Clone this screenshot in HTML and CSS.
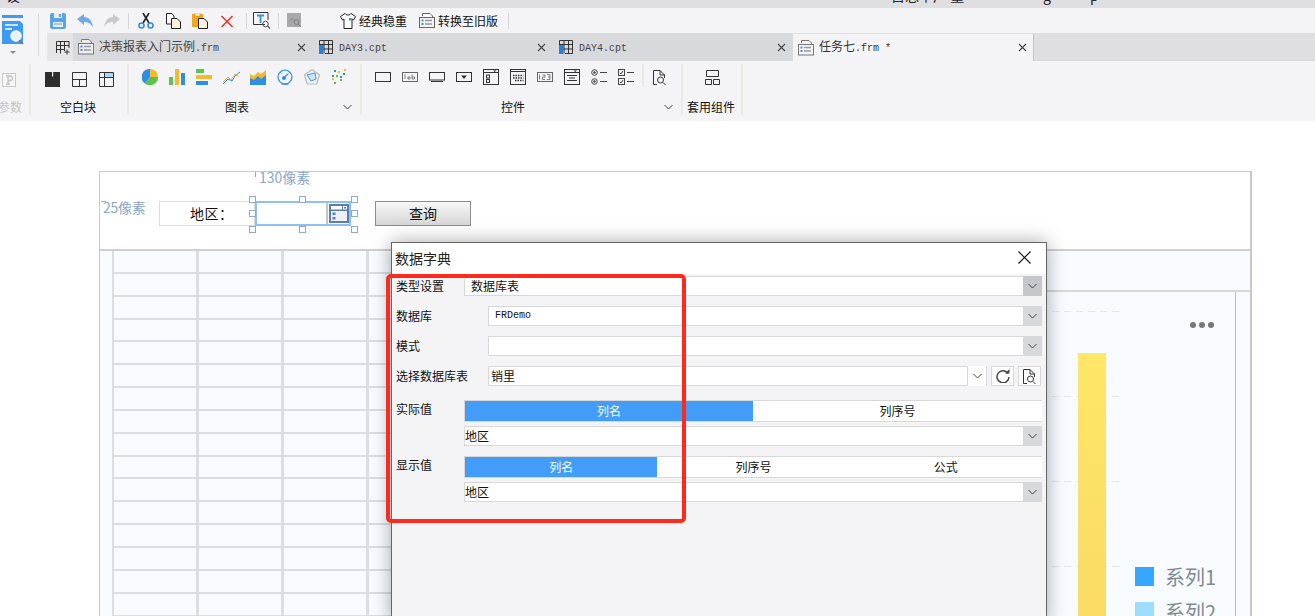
FILE: index.html
```html
<!DOCTYPE html>
<html lang="zh">
<head>
<meta charset="utf-8">
<title>数据字典</title>
<link rel="stylesheet" href="styles.css">
</head>
<body>
<div class="page">
  <div class="titlebar">
    <span class="tb-a">设</span>
    <span class="tb-b">目总不广 量</span>
    <span class="tb-c">g</span>
    <span class="tb-d">p</span>
  </div>

  <div class="head">
    <div class="logo-col">
      <svg class="logo" width="24" height="39" viewBox="0 0 24 39">
        <rect x="1" y="0" width="21" height="3" fill="#3d9bf5"/>
        <path d="M1 6H19L22 9V29H1Z" fill="#3d9bf5"/>
        <path d="M4 10H17M4 14H11" stroke="#fff" stroke-width="1.5"/>
        <circle cx="15" cy="21" r="5" fill="#e8f2fb" stroke="#fff" stroke-width="1.5"/>
        <path d="M18 25L22 29" stroke="#777" stroke-width="1.6"/>
        <path d="M9 36H15L12 39Z" fill="#8a8a8a"/>
      </svg>
    </div>
    <div class="head-main">
      <div class="toolbar">
        <svg class="ti" viewBox="0 0 16 16"><rect width="16" height="16" rx="2" fill="#5ca2e8"/><rect x="4" y="0" width="8" height="5" fill="#e5f0fb"/><rect x="9" y="1" width="2" height="3" fill="#5ca2e8"/><rect x="3" y="9" width="10" height="5" fill="#e5f0fb"/><path d="M4 11H12" stroke="#5ca2e8"/></svg>
        <svg class="ti" viewBox="0 0 16 16"><path d="M0 6L7 1V4C12 4 15 8 16 14C13 10 11 9 7 9V12Z" fill="#6fa9e5"/></svg>
        <svg class="ti ti-last" viewBox="0 0 16 16"><path d="M16 6L9 1V4C4 4 1 8 0 14C3 10 5 9 9 9V12Z" fill="#c9c9c9"/></svg>
        <i class="vsep"></i>
        <svg class="ti" viewBox="0 0 16 16"><path d="M11 0L5 10M5 0L11 10" stroke="#222" stroke-width="1.6" fill="none"/><circle cx="3.5" cy="12.5" r="2.5" fill="none" stroke="#2f8de4" stroke-width="1.6"/><circle cx="12.5" cy="12.5" r="2.5" fill="none" stroke="#2f8de4" stroke-width="1.6"/></svg>
        <svg class="ti" viewBox="0 0 16 16"><path d="M1.5 .5H7L9 3V11H1.5Z" fill="#fff" stroke="#222"/><path d="M6.5 5.500H12L15.500 9V15.500H6.500Z" fill="#fbf3dc" stroke="#222"/></svg>
        <svg class="ti" viewBox="0 0 16 16"><rect x="0" y="1" width="11" height="13" fill="#f2a81c"/><rect x="3" y="0" width="5" height="3" fill="#fff" stroke="#c9860c" stroke-width=".6"/><path d="M6.500 5.500H12L15.500 9V15.500H6.500Z" fill="#fbf3dc" stroke="#222"/></svg>
        <svg class="ti" viewBox="0 0 16 16"><path d="M2.500 3L13.500 14M13.500 3L2.500 14" stroke="#e8332a" stroke-width="1.5"/></svg>
        <i class="vsep vsep-b"></i>
        <svg class="ti ti-t" viewBox="0 0 18 17"><path d="M12 12.500H.5V.5H15V8" fill="none" stroke="#333"/><path d="M4 3.500H11M7.500 3.500V11" stroke="#3f8fe0" stroke-width="1.800"/><circle cx="12.500" cy="12" r="2.800" fill="none" stroke="#555"/><path d="M14.500 14L17 16.500" stroke="#555" stroke-width="1.300"/></svg>
        <i class="vsep vsep-c"></i>
        <svg class="ti ti-g" viewBox="0 0 15 15"><rect width="14" height="14" fill="#a9a9a9"/><path d="M2 9L5 5L8 9" fill="none" stroke="#8d8d8d"/><circle cx="9.500" cy="9" r="2.500" fill="none" stroke="#808080"/><path d="M11 11L14 14" stroke="#808080"/></svg>
        <svg class="ti ti-s" viewBox="0 0 16 16"><path d="M5 .5L.5 3.500L2.500 7L4 6V15.500H12V6L13.500 7L15.500 3.500L11 .5C10 2.500 6 2.500 5 .5Z" fill="#fff" stroke="#222"/><rect x="9" y="5" width="2.500" height="2.500" fill="#2f8de4"/></svg>
        <span class="tb-text">经典稳重</span>
        <svg class="ti ti-d" viewBox="0 0 16 16"><path d="M3.500 3V.5H11L13.500 3V5" fill="#fff" stroke="#666"/><rect x=".5" y="4.500" width="15" height="10" fill="#f4f4f6" stroke="#666"/><rect x="2.500" y="6.500" width="2" height="2" fill="#3d8fe0"/><rect x="2.500" y="10" width="2" height="2" fill="#3d8fe0"/><path d="M6 7.500H13M6 11H13" stroke="#999" stroke-width="1.500"/></svg>
        <span class="tb-text tb-text-b">转换至旧版</span>
        <i class="vsep vsep-d"></i>
      </div>
      <div class="tabs">
        <div class="tab-add">
          <svg width="15" height="15" viewBox="0 0 15 15"><path d="M.5 13V1.500H13V8M.5 5.500H13M.5 9.500H9M4.500 1.500V13.500M8.500 1.500V11" fill="none" stroke="#333"/><path d="M11 9.500V14.500M8.500 12H13.500" stroke="#333"/></svg>
        </div>
        <div class="tab">
          <svg class="tab-ic-f" viewBox="0 0 16 16"><path d="M3.500 3V.5H11L13.500 3V5" fill="#eee" stroke="#777"/><rect x=".5" y="4.500" width="15" height="10.500" fill="#eee" stroke="#777"/><rect x="2.500" y="6.500" width="2" height="2" fill="#3d8fe0"/><rect x="2.500" y="10" width="2" height="2" fill="#3d8fe0"/><path d="M6 7.500H13M6 11H13" stroke="#999" stroke-width="1.500"/></svg>
          <span class="tab-name">决策报表入门示例<span class="mono">.frm</span></span>
          <span class="tab-x"><svg width="9" height="9" viewBox="0 0 9 9"><path d="M1 1L8 8M8 1L1 8" stroke="#444" stroke-width="1.100"/></svg></span>
        </div>
        <div class="tab">
          <svg class="tab-ic-c" viewBox="0 0 14 14"><path d="M.5 13V.5H13.500V13.500H6M.5 4.500H13.500M.5 9H13.500M5 .5V13.500M9.500 .5V13.500" fill="none" stroke="#333"/><path d="M0 5H5V9H4V14H0Z" fill="#2b7fd6"/></svg>
          <span class="tab-name"><span class="mono">DAY3.cpt</span></span>
          <span class="tab-x"><svg width="9" height="9" viewBox="0 0 9 9"><path d="M1 1L8 8M8 1L1 8" stroke="#444" stroke-width="1.100"/></svg></span>
        </div>
        <div class="tab">
          <svg class="tab-ic-c" viewBox="0 0 14 14"><path d="M.5 13V.5H13.500V13.500H6M.5 4.500H13.500M.5 9H13.500M5 .5V13.500M9.500 .5V13.500" fill="none" stroke="#333"/><path d="M0 5H5V9H4V14H0Z" fill="#2b7fd6"/></svg>
          <span class="tab-name"><span class="mono">DAY4.cpt</span></span>
          <span class="tab-x"><svg width="9" height="9" viewBox="0 0 9 9"><path d="M1 1L8 8M8 1L1 8" stroke="#444" stroke-width="1.100"/></svg></span>
        </div>
        <div class="tab tab-on">
          <svg class="tab-ic-f" viewBox="0 0 16 16"><path d="M3.500 3V.5H11L13.500 3V5" fill="#f4f4f6" stroke="#777"/><rect x=".5" y="4.500" width="15" height="10.500" fill="#f4f4f6" stroke="#777"/><rect x="2.500" y="6.500" width="2" height="2" fill="#3d8fe0"/><rect x="2.500" y="10" width="2" height="2" fill="#3d8fe0"/><path d="M6 7.500H13M6 11H13" stroke="#999" stroke-width="1.500"/></svg>
          <span class="tab-name tab-name-on">任务七<span class="mono">.frm *</span></span>
          <span class="tab-x"><svg width="9" height="9" viewBox="0 0 9 9"><path d="M1 1L8 8M8 1L1 8" stroke="#444" stroke-width="1.100"/></svg></span>
        </div>
        <div class="tab-rest"></div>
      </div>
    </div>
  </div>

  <div class="ribbon">
    <section class="rs rs-0">
      <div class="rs-icons rs-icons-0">
        <svg width="14" height="14" viewBox="0 0 14 14"><rect x=".5" y=".5" width="13" height="13" fill="#f7f7f7" stroke="#c8c8c8"/><path d="M4 3H8.500C11 3 11 7.500 8.500 7.500H6M6 3V11M4 11H8" fill="none" stroke="#c0c0c0" stroke-width="1.300"/></svg>
      </div>
      <div class="rs-label rs-label-0">参数</div>
    </section>
    <section class="rs rs-1">
      <div class="rs-icons rs-icons-1">
        <svg width="15" height="15" viewBox="0 0 15 15"><rect width="15" height="15" fill="#2e2e2e"/><rect x="7" y="0" width="1.200" height="4.500" fill="#f4f4f6"/></svg>
        <svg width="15" height="15" viewBox="0 0 15 15"><path d="M.5 .5H14.500V14.500H.5ZM.5 7.500H14.500M7.500 7.500V14.500" fill="none" stroke="#333"/></svg>
        <svg width="15" height="15" viewBox="0 0 15 15"><rect x="5" y="1" width="9" height="4" fill="#a9d6f7"/><path d="M.5 .5H14.500V14.500H.5ZM.5 5.500H14.500M5.500 .5V14.500" fill="none" stroke="#333"/></svg>
      </div>
      <div class="rs-label rs-label-1">空白块</div>
    </section>
    <section class="rs rs-2">
      <div class="rs-icons rs-icons-2">
        <svg width="16" height="16" viewBox="0 0 16 16"><path d="M8 0A8 8 0 0 1 16 8H8Z" fill="#f5b92e"/><path d="M16 8A8 8 0 0 1 3 14.500L8 8Z" fill="#5fc24f"/><path d="M3 14.500A8 8 0 0 1 8 0V8Z" fill="#2e8fe0"/></svg>
        <svg width="16" height="16" viewBox="0 0 16 16"><rect x="0" y="8" width="4" height="8" fill="#5fc24f"/><rect x="6" y="0" width="4" height="16" fill="#f5b92e"/><rect x="12" y="4" width="4" height="12" fill="#2e8fe0"/></svg>
        <svg width="16" height="16" viewBox="0 0 16 16"><rect x="0" y="0" width="8" height="4" fill="#5fc24f"/><rect x="0" y="6" width="16" height="4" fill="#f5b92e"/><rect x="0" y="12" width="12" height="4" fill="#2e8fe0"/></svg>
        <svg class="i-line" width="17" height="16" viewBox="0 0 17 16"><path d="M0 13L5 8L8 11L12 5L16 8" fill="none" stroke="#f5b92e"/><path d="M0 15L5 10L9 12L12 7L17 3" fill="none" stroke="#2e8fe0"/></svg>
        <svg width="16" height="16" viewBox="0 0 16 16"><path d="M0 5L4 7L8 3L11 5L16 1V11H0Z" fill="#f5b92e"/><path d="M0 9L4 11L8 7L11 10L16 6V16H0Z" fill="#2e8fe0"/></svg>
        <svg width="16" height="16" viewBox="0 0 16 16"><circle cx="8" cy="8" r="7" fill="none" stroke="#2e8fe0" stroke-width="1.200"/><path d="M3 3L4.500 4.500M13 3L11.500 4.500" stroke="#2e8fe0"/><circle cx="7" cy="9" r="2" fill="#2e8fe0"/><path d="M7.500 8L11 5" stroke="#2e8fe0" stroke-width="1.200"/><path d="M4.500 15H11.500" stroke="#2e8fe0" stroke-width="1.500"/></svg>
        <svg width="16" height="16" viewBox="0 0 16 16"><path d="M8 .5L15.500 6L12.800 15H3.200L.5 6Z" fill="#eef2f5" stroke="#bbb" stroke-width="1.200"/><path d="M3 6L11 4L12 10L7 12Z" fill="#cfe4f6" stroke="#3d9bd6"/></svg>
        <svg width="16" height="16" viewBox="0 0 16 16"><g fill="#2e8fe0"><rect x="3" y="1" width="2" height="2"/><rect x="9" y="7" width="2" height="2"/><rect x="12" y="4" width="2" height="2"/><rect x="1" y="6" width="2" height="2"/></g><g fill="#f5b92e"><rect x="13" y="0" width="2" height="2"/><rect x="7" y="2" width="2" height="2"/><rect x="1" y="9" width="2" height="2"/></g><g fill="#5fc24f"><rect x="5" y="6" width="2" height="2"/><rect x="3" y="13" width="2" height="2"/><rect x="9" y="10" width="2" height="2"/></g></svg>
      </div>
      <div class="rs-label rs-label-2"><span>图表</span><svg class="chev" width="9" height="6" viewBox="0 0 9 6"><path d="M.5 1L4.500 5L8.500 1" fill="none" stroke="#444"/></svg></div>
    </section>
    <section class="rs rs-3">
      <div class="rs-icons rs-icons-3">
        <svg width="16" height="10" viewBox="0 0 16 10"><rect x=".5" y=".5" width="15" height="9" fill="none" stroke="#333"/></svg>
        <svg width="16" height="10" viewBox="0 0 16 10"><rect x=".5" y=".5" width="15" height="9" fill="none" stroke="#666"/><path d="M3 2.500V7M6 5H8V7H6ZM10 2.500V7H12.500V5H10" fill="none" stroke="#666" stroke-width=".8"/></svg>
        <svg width="16" height="10" viewBox="0 0 16 10"><rect x=".5" y=".5" width="15" height="7.500" fill="none" stroke="#333"/><path d="M2 9.500H14" stroke="#333"/></svg>
        <svg width="16" height="10" viewBox="0 0 16 10"><rect x=".5" y=".5" width="15" height="9" fill="none" stroke="#333"/><path d="M8 7L5 3.500H11Z" fill="#333"/></svg>
        <svg width="16" height="16" viewBox="0 0 16 16"><rect x=".5" y=".5" width="15" height="15" fill="none" stroke="#333"/><path d="M.5 3.500H15.500" stroke="#333"/><path d="M10 1.500H13.500L11.700 3Z" fill="#333"/><rect x="3.500" y="6" width="3" height="3" fill="none" stroke="#333"/><rect x="3.500" y="10.500" width="3" height="3" fill="none" stroke="#333"/></svg>
        <svg width="16" height="16" viewBox="0 0 16 16"><rect x=".5" y=".5" width="15" height="15" fill="none" stroke="#333"/><path d="M.5 2.500H15.500" stroke="#333"/><path d="M3 6.500H13.500M3 9H13.500M5 11.500H13.500" stroke="#333" stroke-width="1.500" stroke-dasharray="1.500 1"/></svg>
        <svg width="16" height="10" viewBox="0 0 16 10"><rect x=".5" y=".5" width="15" height="9" fill="none" stroke="#666"/><path d="M2.500 2.500V7.500M5.500 3H8V5H5.500V7.500H8M10 2.500H13V7.500H10M11 5H13" fill="none" stroke="#666" stroke-width=".8"/></svg>
        <svg width="16" height="16" viewBox="0 0 16 16"><rect x=".5" y=".5" width="15" height="15" fill="none" stroke="#333"/><path d="M.5 3.500H15.500" stroke="#333"/><path d="M9.500 1.500H13L11.200 3Z" fill="#333"/><path d="M3 6.500H13M5 9H11M3 11.500H13" stroke="#333"/></svg>
        <svg width="16" height="16" viewBox="0 0 16 16"><circle cx="3.500" cy="3.500" r="2.800" fill="none" stroke="#444"/><circle cx="3.500" cy="3.500" r="1.200" fill="#444"/><circle cx="3.500" cy="12.500" r="2.800" fill="none" stroke="#444"/><circle cx="3.500" cy="12.500" r="1.200" fill="#444"/><path d="M9 3.500H16M9 12.500H16" stroke="#444" stroke-width="1.200"/></svg>
        <svg width="16" height="16" viewBox="0 0 16 16"><rect x=".5" y=".5" width="6" height="6" fill="none" stroke="#444"/><rect x=".5" y="9.500" width="6" height="6" fill="none" stroke="#444"/><path d="M2 4L3 5L5 2M2 13L3 14L5 11" fill="none" stroke="#444"/><path d="M9 3.500H16M9 12.500H16" stroke="#444" stroke-width="1.200"/></svg>
        <i class="inner-sep"></i>
        <svg class="i-find" width="13" height="15" viewBox="0 0 13 15"><path d="M4 14.500H.5V.5H7L11.500 5V8" fill="none" stroke="#333"/><path d="M7 .5V5H11.500" fill="none" stroke="#333"/><circle cx="7.500" cy="10" r="3" fill="none" stroke="#333"/><path d="M10 12.500L12.500 15" stroke="#333"/></svg>
      </div>
      <div class="rs-label rs-label-3"><span>控件</span><svg class="chev" width="9" height="6" viewBox="0 0 9 6"><path d="M.5 1L4.500 5L8.500 1" fill="none" stroke="#444"/></svg></div>
    </section>
    <section class="rs rs-4">
      <div class="rs-icons rs-icons-4">
        <svg width="15" height="15" viewBox="0 0 15 15"><path d="M1.500 .5H13.500V6.500H1.500ZM.5 9.500H6.500V14.500H.5ZM8.500 9.500H14.500V14.500H8.500Z" fill="none" stroke="#333"/></svg>
      </div>
      <div class="rs-label rs-label-4">套用组件</div>
    </section>
  </div>

  <main class="canvas">
    <div class="frame">
      <div class="query">
        <span class="dim dim-h">25像素</span>
        <div class="q-label">地区：</div>
        <div class="q-input">
          <i class="q-sep"></i>
          <svg class="q-ic" width="20" height="19" viewBox="0 0 20 19"><rect width="20" height="19" fill="#5b7cae"/><rect x="2" y="2" width="11" height="3.500" fill="#fff"/><rect x="14" y="2" width="4" height="3.500" fill="#fff"/><rect x="15" y="3" width="2" height="1.500" fill="#5b7cae"/><rect x="2" y="7" width="16" height="10" fill="#eef2f8"/><rect x="3.500" y="8.500" width="3" height="2.500" fill="#5b7cae"/><rect x="3.500" y="13" width="3" height="2.500" fill="#5b7cae"/></svg>
        </div>
        <button class="q-btn">查询</button>
        <span class="dim dim-w">130像素</span>
        <i class="tick tick-h"></i>
        <i class="tick tick-w"></i>
        <i class="hd h1"></i><i class="hd h2"></i><i class="hd h3"></i><i class="hd h4"></i><i class="hd h5"></i><i class="hd h6"></i><i class="hd h7"></i><i class="hd h8"></i>
      </div>
      <div class="report">
        <div class="sheet"></div>
        <div class="side">
          <div class="side-head"></div>
          <div class="chart">
            <div class="more"><i></i><i></i><i></i></div>
            <div class="bar"></div>
            <div class="legend">
              <div class="lg"><i class="sw sw-1"></i>系列1</div>
              <div class="lg"><i class="sw sw-2"></i>系列2</div>
            </div>
          </div>
        </div>
      </div>
    </div>
  </main>

  <div class="dialog">
    <header class="d-title">
      <span>数据字典</span>
      <svg width="13" height="13" viewBox="0 0 13 13"><path d="M.5 .5L12.500 12.500M12.500 .5L.5 12.500" stroke="#111" stroke-width="1.100"/></svg>
    </header>
    <div class="d-body">
      <div class="d-row">
        <label>类型设置</label>
        <div class="combo"><span class="v v-6">数据库表</span><b class="arr arr-on"><svg width="9" height="6" viewBox="0 0 9 6"><path d="M.5 1L4.500 5L8.500 1" fill="none" stroke="#444"/></svg></b></div>
      </div>
      <div class="d-row">
        <label class="wide">数据库</label>
        <div class="combo"><span class="v v-6 mono-v">FRDemo</span><b class="arr"><svg width="9" height="6" viewBox="0 0 9 6"><path d="M.5 1L4.500 5L8.500 1" fill="none" stroke="#444"/></svg></b></div>
      </div>
      <div class="d-row">
        <label class="wide">模式</label>
        <div class="combo"><span class="v"></span><b class="arr"><svg width="9" height="6" viewBox="0 0 9 6"><path d="M.5 1L4.500 5L8.500 1" fill="none" stroke="#444"/></svg></b></div>
      </div>
      <div class="d-row">
        <label class="wide">选择数据库表</label>
        <div class="combo combo-t"><span class="v v-3">销里</span><b class="arr arr-w"><svg width="9" height="6" viewBox="0 0 9 6"><path d="M.5 1L4.500 5L8.500 1" fill="none" stroke="#444"/></svg></b></div>
        <button class="sq"><svg width="14" height="14" viewBox="0 0 14 14"><path d="M12 4.500A6 6 0 1 0 13 8" fill="none" stroke="#444" stroke-width="1.500"/><path d="M9 4.500H13.500V0Z" fill="#444"/></svg></button>
        <button class="sq"><svg width="13" height="15" viewBox="0 0 13 15"><path d="M4 14.500H.5V.5H7L11.500 5V8" fill="none" stroke="#333"/><path d="M7 .5V5H11.500" fill="none" stroke="#333"/><circle cx="7.500" cy="10" r="3" fill="none" stroke="#333"/><path d="M10 12.500L12.500 15" stroke="#333"/></svg></button>
      </div>
      <div class="d-row d-row-seg">
        <label>实际值</label>
        <div class="seg"><span class="on seg-a">列名</span><span>列序号</span></div>
      </div>
      <div class="d-row d-row-sub">
        <div class="combo"><span class="v v-1">地区</span><b class="arr"><svg width="9" height="6" viewBox="0 0 9 6"><path d="M.5 1L4.500 5L8.500 1" fill="none" stroke="#444"/></svg></b></div>
      </div>
      <div class="d-row d-row-seg2">
        <label>显示值</label>
        <div class="seg"><span class="on">列名</span><span>列序号</span><span>公式</span></div>
      </div>
      <div class="d-row d-row-sub">
        <div class="combo"><span class="v v-1">地区</span><b class="arr"><svg width="9" height="6" viewBox="0 0 9 6"><path d="M.5 1L4.500 5L8.500 1" fill="none" stroke="#444"/></svg></b></div>
      </div>
    </div>
  </div>

  <div class="redbox"></div>
</div>
</body>
</html>
```

FILE: styles.css
```css
* { box-sizing: border-box; }
html, body { margin: 0; padding: 0; height: 616px; overflow: hidden; background: #fff; }
body, button { font-family: "Noto Sans CJK SC", "Noto Sans", sans-serif; color: #111; }
svg { display: block; flex: none; }
i { display: block; }

.page { position: relative; width: 1315px; height: 616px; overflow: hidden; display: flex; flex-direction: column; }

.titlebar { height: 8px; background: #dfdfe1; overflow: hidden; display: flex; font-size: 14px; line-height: 14px; color: #222; flex: none; }
.titlebar span { margin-top: -12px; display: block; height: 20px; }
.tb-a { margin-left: 6px; width: 885px; color: #222; }
.tb-b { width: 152px; }
.tb-c { width: 47px; }

.head { display: flex; height: 53px; background: #f4f4f6; flex: none; }
.logo-col { width: 47px; flex: none; padding: 6px 0 0 1px; position: relative; }
.logo { margin-top: 1px; }
.logo-col::after { content: ""; position: absolute; left: 38px; top: 6px; width: 1px; height: 42px; background: #d9d9d9; }
.head-main { flex: 1; min-width: 0; display: flex; flex-direction: column; }

.toolbar { height: 25px; display: flex; align-items: center; padding-left: 3px; }
.ti { width: 16px; height: 16px; margin-right: 11px; }
.ti-last { margin-right: 8px; }
.vsep { width: 1px; height: 16px; background: #d6d6d6; margin-right: 9px; flex: none; }
.vsep-b { margin-right: 6px; }
.ti-t { width: 18px; height: 17px; margin-right: 7px; }
.vsep-c { margin-right: 8px; }
.ti-g { width: 15px; height: 15px; margin-right: 38px; }
.ti-s { margin-right: 3px; }
.tb-text { font-size: 12px; line-height: 16px; width: 60px; white-space: nowrap; }
.tb-text-b { width: 70px; }
.ti-d { margin-right: 3px; }
.vsep-d { margin: 0; }

.tabs { height: 28px; display: flex; }
.tab-add { width: 26px; background: #e4e4e7; display: flex; align-items: center; justify-content: center; padding: 1px 0 0 6px; flex: none; }
.tab { width: 240px; flex: none; background: #d8d9dc; display: flex; align-items: center; padding: 0 7px 0 6px; font-size: 12px; color: #444; white-space: nowrap; }
.tab-ic-f { width: 16px; height: 16px; margin: 0 5px 0 -1px; }
.tab-ic-c { width: 14px; height: 14px; margin-right: 6px; }
.tab-name { line-height: 16px; }
.mono { font-family: "Liberation Mono", monospace; font-size: 10px; }
.tab-x { margin-left: auto; }
.tab-on { background: #f4f4f6; margin-left: 1px; border-top: 1px solid #dedee0; border-right: 1px solid #c4c4c6; padding: 0 6px 0 5px; }
.tab-on .tab-ic-f { margin-left: 0; }
.tab-on { padding-left: 4px; }
.tab-name-on { color: #333; }
.tab-rest { flex: 1; background: #dfdfe1; border-bottom: 1px solid #d8d8da; }

.ribbon { display: flex; height: 60px; background: #f4f4f6; flex: none; }
.rs { position: relative; flex: none; display: flex; flex-direction: column; }
.rs::after { content: ""; position: absolute; right: 0; top: 3px; width: 2px; height: 50px; background: #eaeae4; }
.rs-0 { width: 31px; }
.rs-1 { width: 98px; }
.rs-2 { width: 233px; }
.rs-3 { width: 321px; }
.rs-4 { width: 60px; }
.rs-icons { height: 37px; display: flex; align-items: flex-start; flex: none; }
.rs-icons-0 { padding: 12px 0 0 2px; }
.rs-icons-1 { padding: 11px 0 0 14px; gap: 12px; }
.rs-icons-2 { padding: 8px 0 0 13px; gap: 11px; }
.i-line { margin-right: -1px; }
.rs-icons-3 { padding: 8px 0 0 13px; gap: 11px; }
.rs-icons-3 svg[height="10"] { margin-top: 3px; }
.rs-icons-4 { padding: 9px 0 0 22px; }
.inner-sep { width: 2px; height: 23px; background: #eaeae4; margin: -5px -2px 0 -3px; flex: none; }
.i-find { margin-top: 1px; }
.rs-label { font-size: 12px; line-height: 18px; display: flex; align-items: center; color: #111; white-space: nowrap; }
.rs-label-0 { color: #c4c4c4; margin-left: -2px; }
.rs-label-1 { padding-left: 29px; }
.rs-label-2 { padding-left: 96px; }
.rs-label-3 { padding-left: 139px; }
.rs-label-4 { padding-left: 4px; }
.chev { margin-left: auto; margin-right: 10px; }

.canvas { flex: 1; min-height: 0; padding: 50px 0 0 99px; background: #fff; overflow: hidden; }
.frame { width: 1153px; height: 500px; border: 1px solid #c9c9c9; border-right-width: 2px; border-bottom: 0; display: flex; flex-direction: column; }

.query { position: relative; height: 77px; flex: none; display: flex; align-items: flex-start; padding: 29px 0 0 59px; }
.q-label { width: 96px; height: 25px; background: #fff; border: 1px solid #dcdcdc; font-size: 14px; line-height: 22px; padding-left: 30px; letter-spacing: .5px; }
.q-input { width: 96px; height: 25px; border: 2px solid #8fc0f4; display: flex; justify-content: flex-end; align-items: center; }
.q-sep { width: 2px; height: 21px; background: #c4c4c4; margin-right: 1px; }
.q-btn { width: 96px; height: 25px; margin-left: 24px; padding: 0 0 2px; font-size: 14px; line-height: 20px; border: 1px solid #8c8c8c; background: linear-gradient(#f7f7f7, #d6d6d6); color: #111; }
.dim { position: absolute; font-size: 14px; line-height: 18px; color: #8ba8c8; white-space: nowrap; }
.dim-h { left: 3px; top: 26px; letter-spacing: -.3px; }
.dim-w { left: 159px; top: -4px; }
.tick { position: absolute; background: #8ba8c8; }
.tick-h { left: 1px; top: 29px; width: 5px; height: 1px; }
.tick-w { left: 155px; top: 0; width: 1px; height: 5px; }
.hd { position: absolute; width: 7px; height: 7px; background: #fff; border: 1px solid #8fa9c6; }
.h1 { left: 149px; top: 24px; }
.h2 { left: 199px; top: 24px; }
.h3 { left: 251px; top: 24px; }
.h4 { left: 149px; top: 38px; }
.h5 { left: 251px; top: 38px; }
.h6 { left: 149px; top: 54px; }
.h7 { left: 199px; top: 54px; }
.h8 { left: 251px; top: 54px; }

.report { flex: 1; display: flex; border-top: 2px solid #cfcfcf; background: #f8fbff; min-height: 0; }
.sheet { width: 935px; flex: none; margin-left: 12px;
  background-color: #f8fbff;
  background-image:
    repeating-linear-gradient(90deg, #dcdde0 0 2px, transparent 2px 84px, #dcdde0 84px 85px),
    repeating-linear-gradient(180deg, transparent 0 20.85px, #dcdde0 20.85px 22.85px);
}
.side { flex: 1; display: flex; flex-direction: column; min-width: 0; }
.side-head { height: 41px; border-bottom: 2px solid #d8d8d8; flex: none; }
.chart { position: relative; flex: 1; width: 189px; border-right: 1px solid #bdbdbd;
  background-image: repeating-linear-gradient(180deg, transparent 0 19px, #e4e6e8 19px 20px, transparent 20px 85px); }
.chart::before { content: ""; position: absolute; left: 0; width: 77px; top: 0; bottom: 0; background: repeating-linear-gradient(90deg, #f8fbff 0 5px, transparent 5px 12px); }
.chart::after { content: ""; position: absolute; left: 77px; right: 0; top: 0; bottom: 0; background: #f8fbff; }
.more { position: absolute; z-index: 1; left: 143px; top: 30px; display: flex; gap: 3px; }
.more i { width: 6px; height: 6px; border-radius: 50%; background: #777; }
.bar { position: absolute; z-index: 1; left: 31px; top: 61px; width: 28px; bottom: 0; background: linear-gradient(#fee767, #f8d866); }
.legend { position: absolute; z-index: 1; left: 88px; top: 270px; display: flex; flex-direction: column; gap: 7px; }
.lg { display: flex; align-items: center; gap: 11px; height: 28px; font-size: 20px; color: #7e8a92; }
.sw { width: 19px; height: 19px; }
.sw-1 { background: #35a7fd; }
.sw-2 { background: #9ddcfb; }

.dialog { position: absolute; left: 391px; top: 242px; width: 656px; height: 380px; border: 1px solid #666; background: #f4f4f6; box-shadow: 0 0 18px rgba(0,0,0,.35); }
.d-title { height: 31px; background: #fff; display: flex; align-items: center; justify-content: space-between; padding: 0 15px 2px 3px; font-size: 14px; color: #222; }
.d-body { padding: 2px 4px 0 4px; font-size: 12px; }
.d-row { display: flex; height: 20px; margin-bottom: 10px; }
.d-row label { width: 68px; flex: none; line-height: 19px; color: #111; }
.d-row label.wide { width: 92px; }
.combo { flex: 1; min-width: 0; height: 20px; display: flex; background: #fff; border: 1px solid #d8d8d8; border-width: 1px 0 1px 1px; }
.v { flex: 1; line-height: 17px; padding-left: 2px; }
.v-6 { padding-left: 6px; }
.v-3 { padding-left: 2px; }
.v-1 { padding-left: 0; }
.mono-v { font-family: "Liberation Mono", monospace; font-size: 10px; line-height: 18px; color: #111; }
.arr { width: 19px; flex: none; margin: -1px 0; background: #d7d8dc; display: flex; align-items: center; justify-content: center; }
.arr-on { background: #c6c7cb; }
.arr-w { width: 20px; background: #fff; border-left: 1px solid #d8d8d8; border-right: 1px solid #d8d8d8; }
.combo-t { flex: none; width: 499px; }
.sq { width: 23px; height: 20px; margin-left: 4px; padding: 0; background: #fff; border: 1px solid #d8d8d8; display: flex; align-items: center; justify-content: center; flex: none; }
.d-row-seg { height: 22px; margin-top: 14px; margin-bottom: 4px; }
.d-row-seg2 { height: 22px; margin-bottom: 4px; }
.d-row-seg label, .d-row-seg2 label { line-height: 18px; }
.d-row-sub { padding-left: 68px; }
.seg { flex: 1; display: flex; height: 22px; background: #fff; border: 1px solid #d8d8d8; border-right: 0; }
.seg span { flex: 1; text-align: center; line-height: 20px; color: #111; }
.seg span.on { background: #429cf8; color: #fff; }
.seg span.seg-a { flex: none; width: 288px; }

.redbox { position: absolute; left: 386px; top: 274px; width: 300px; height: 249px; border: 4px solid #ff2a1e; border-radius: 5px; }
```
